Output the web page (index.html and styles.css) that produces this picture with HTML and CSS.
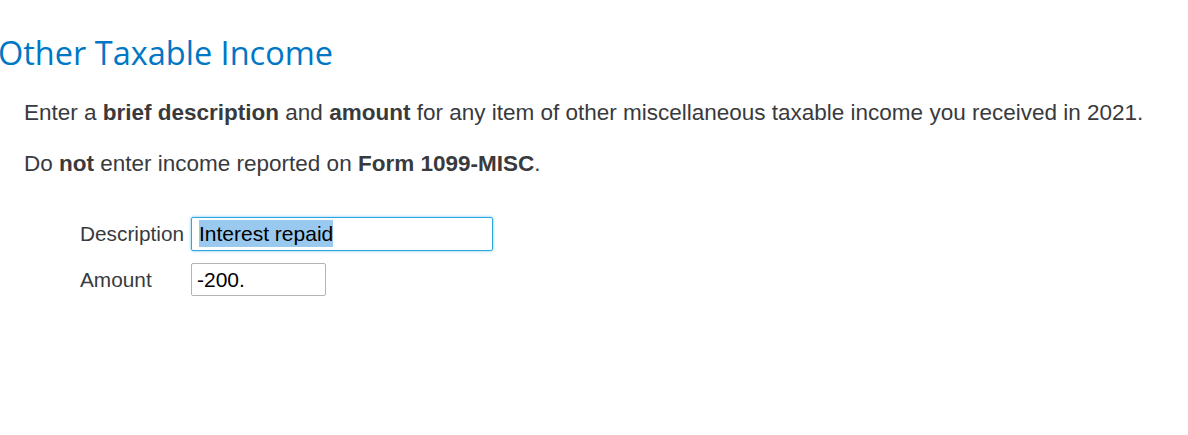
FILE: index.html
```html
<!DOCTYPE html>
<html lang="en">
<head>
  <meta charset="UTF-8">
  <title>Other Taxable Income</title>
  <link rel="stylesheet" href="styles.css">
</head>
<body>
  <div class="page">
    <h1 class="title">Other Taxable Income</h1>
    <div class="intro">
      <p>Enter a <b>brief description</b> and <b>amount</b> for any item of other miscellaneous taxable income you received in 2021.</p>
      <p>Do <b>not</b> enter income reported on <b>Form 1099-MISC</b>.</p>
    </div>
    <div class="form">
      <div class="form-row">
        <label class="form-label">Description</label>
        <div class="field field-desc focused"><span class="sel">Interest repaid</span></div>
      </div>
      <div class="form-row">
        <label class="form-label">Amount</label>
        <div class="field field-amount">-200.</div>
      </div>
    </div>
  </div>
</body>
</html>
```

FILE: styles.css
```css
:root {
  --title-color: #0077c5;
  --text-color: #393a3d;
  --focus-color: #2ca5e0;
  --select-bg: #99c9ef;
}
* {
  box-sizing: border-box;
  margin: 0;
  padding: 0;
}
body {
  font-family: "Liberation Sans", Arial, sans-serif;
  color: var(--text-color);
  background: #fff;
}
.page {
  padding-top: 33px;
}
.title {
  font-family: "Open Sans", Lato, sans-serif;
  font-weight: 500;
  font-size: 32.5px;
  line-height: 40px;
  color: var(--title-color);
  margin-left: -2px;
}
.intro {
  padding: 26px 0 0 24px;
}
.intro p {
  font-size: 22.5px;
  line-height: 28px;
  margin-bottom: 23px;
}
.form {
  padding: 16px 0 0 80px;
  display: flex;
  flex-direction: column;
  gap: 12px;
}
.form-row {
  display: flex;
  align-items: center;
}
.form-label {
  width: 111px;
  font-size: 20.8px;
  color: var(--text-color);
}
.field {
  height: 34px;
  border: 1px solid #b3b3b3;
  border-radius: 2px;
  font-size: 21px;
  line-height: 32px;
  color: #000;
  padding: 0 6px;
}
.field-desc {
  width: 302px;
  padding-left: 7px;
}
.field-amount {
  width: 135px;
  height: 33px;
  line-height: 31px;
  padding-left: 5px;
}
.focused {
  border-color: var(--focus-color);
  box-shadow: 0 0 3px rgba(44, 165, 224, 0.7);
}
.sel {
  background: var(--select-bg);
  padding: 2px 0;
}
```
